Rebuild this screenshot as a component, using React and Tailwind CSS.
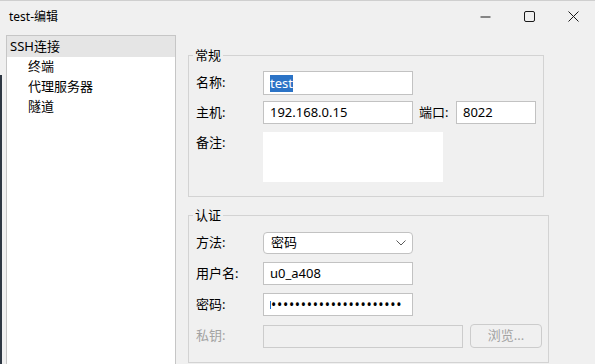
import { useState } from "react";

const font = { fontFamily: '"Noto Sans", "Noto Sans CJK SC", sans-serif' };

function Field({ className = "", children }) {
  return (
    <div className={`h-[23px] bg-white border border-[#c2c2c2] flex items-center px-[6px] ${className}`}>
      {children}
    </div>
  );
}

function Group({ title, className = "", children }) {
  return (
    <div className={`relative border border-[#d3d3d3] ${className}`}>
      <span className="absolute -top-[10px] left-[4px] px-[2px] bg-[#f0f0f0] leading-[18px]">{title}</span>
      {children}
    </div>
  );
}

export default function App() {
  const [tree] = useState(["终端", "代理服务器", "隧道"]);

  return (
    <div
      className="w-[595px] h-[364px] bg-[#f0f0f0] overflow-hidden flex flex-col border-t border-[#cfcfcf] text-[13px] text-black"
      style={font}
    >
      {/* title bar */}
      <div className="h-[34px] flex items-center shrink-0">
        <span className="pl-[9px] text-[12px] -mt-[3px] flex-1">test-编辑</span>
        <div className="flex h-full -mt-[3px]">
          <div className="w-[44px] flex items-center justify-center">
            <svg width="11" height="11" viewBox="0 0 11 11">
              <path d="M0.5 6h10" stroke="#1a1a1a" strokeWidth="1" />
            </svg>
          </div>
          <div className="w-[44px] flex items-center justify-center">
            <svg width="11" height="11" viewBox="0 0 11 11">
              <rect x="0.5" y="0.5" width="10" height="10" rx="1.5" fill="none" stroke="#1a1a1a" strokeWidth="1" />
            </svg>
          </div>
          <div className="w-[44px] flex items-center justify-center">
            <svg width="11" height="11" viewBox="0 0 11 11">
              <path d="M0.5 0.5l10 10M10.5 0.5l-10 10" stroke="#1a1a1a" strokeWidth="1" />
            </svg>
          </div>
        </div>
      </div>

      <div className="flex flex-1 min-h-0">
        <div className="w-[2px] bg-[#2e3743] mt-[40px]" />
        {/* tree */}
        <div className="ml-[4px] w-[170px] bg-white border border-b-0 border-[#c6c6c6]">
          <div className="h-[21px] bg-[#e5e5e5] flex items-center pl-[3px]">SSH连接</div>
          {tree.map((t) => (
            <div key={t} className="h-[20px] flex items-center pl-[21px]">
              {t}
            </div>
          ))}
        </div>

        {/* right column */}
        <div className="ml-[12px] flex flex-col">
          <Group title="常规" className="mt-[20px] w-[356px] h-[142px] pl-[7px] pt-[15px]">
            <div className="flex items-center">
              <span className="w-[67px]">名称:</span>
              <Field className="w-[150px] h-[24px] border-[#94b6de]">
                <span className="bg-[#2b73c6] text-white leading-[17px]">test</span>
              </Field>
            </div>
            <div className="flex items-center mt-[6px]">
              <span className="w-[67px]">主机:</span>
              <Field className="w-[150px]">192.168.0.15</Field>
              <span className="ml-[6px] w-[37px]">端口:</span>
              <Field className="w-[80px]">8022</Field>
            </div>
            <div className="flex mt-[8px]">
              <span className="w-[67px] mt-[1px]">备注:</span>
              <div className="w-[180px] h-[50px] bg-white" />
            </div>
          </Group>

          <Group title="认证" className="mt-[18px] w-[361px] h-[148px] pl-[7px] pt-[16px]">
            <div className="flex items-center">
              <span className="w-[67px]">方法:</span>
              <div className="w-[150px] h-[22px] bg-white border border-[#c2c2c2] rounded-[4px] flex items-center justify-between pl-[7px] pr-[6px]">
                <span>密码</span>
                <svg width="10" height="6" viewBox="0 0 10 6">
                  <path d="M0.5 0.5l4.5 4.5 4.5-4.5" fill="none" stroke="#5a5a5a" strokeWidth="1" />
                </svg>
              </div>
            </div>
            <div className="flex items-center mt-[8px]">
              <span className="w-[67px]">用户名:</span>
              <Field className="w-[150px]">u0_a408</Field>
            </div>
            <div className="flex items-center mt-[8px]">
              <span className="w-[67px]">密码:</span>
              <Field className="w-[150px] pl-[6px] overflow-hidden">
                <span className="w-[1px] h-[8px] bg-[#1a6fd0] shrink-0" />
                <span className="text-[14px] tracking-[0.7px] leading-none whitespace-nowrap">{"•".repeat(22)}</span>
              </Field>
            </div>
            <div className="flex items-center mt-[8px]">
              <span className="w-[67px] text-[#a3a3a3]">私钥:</span>
              <div className="w-[200px] h-[23px] border border-[#cccccc]" />
              <div className="ml-[7px] w-[72px] h-[24px] border border-[#cccccc] rounded-[4px] flex items-center justify-center text-[#a3a3a3]">
                浏览...
              </div>
            </div>
          </Group>
        </div>
      </div>
    </div>
  );
}
